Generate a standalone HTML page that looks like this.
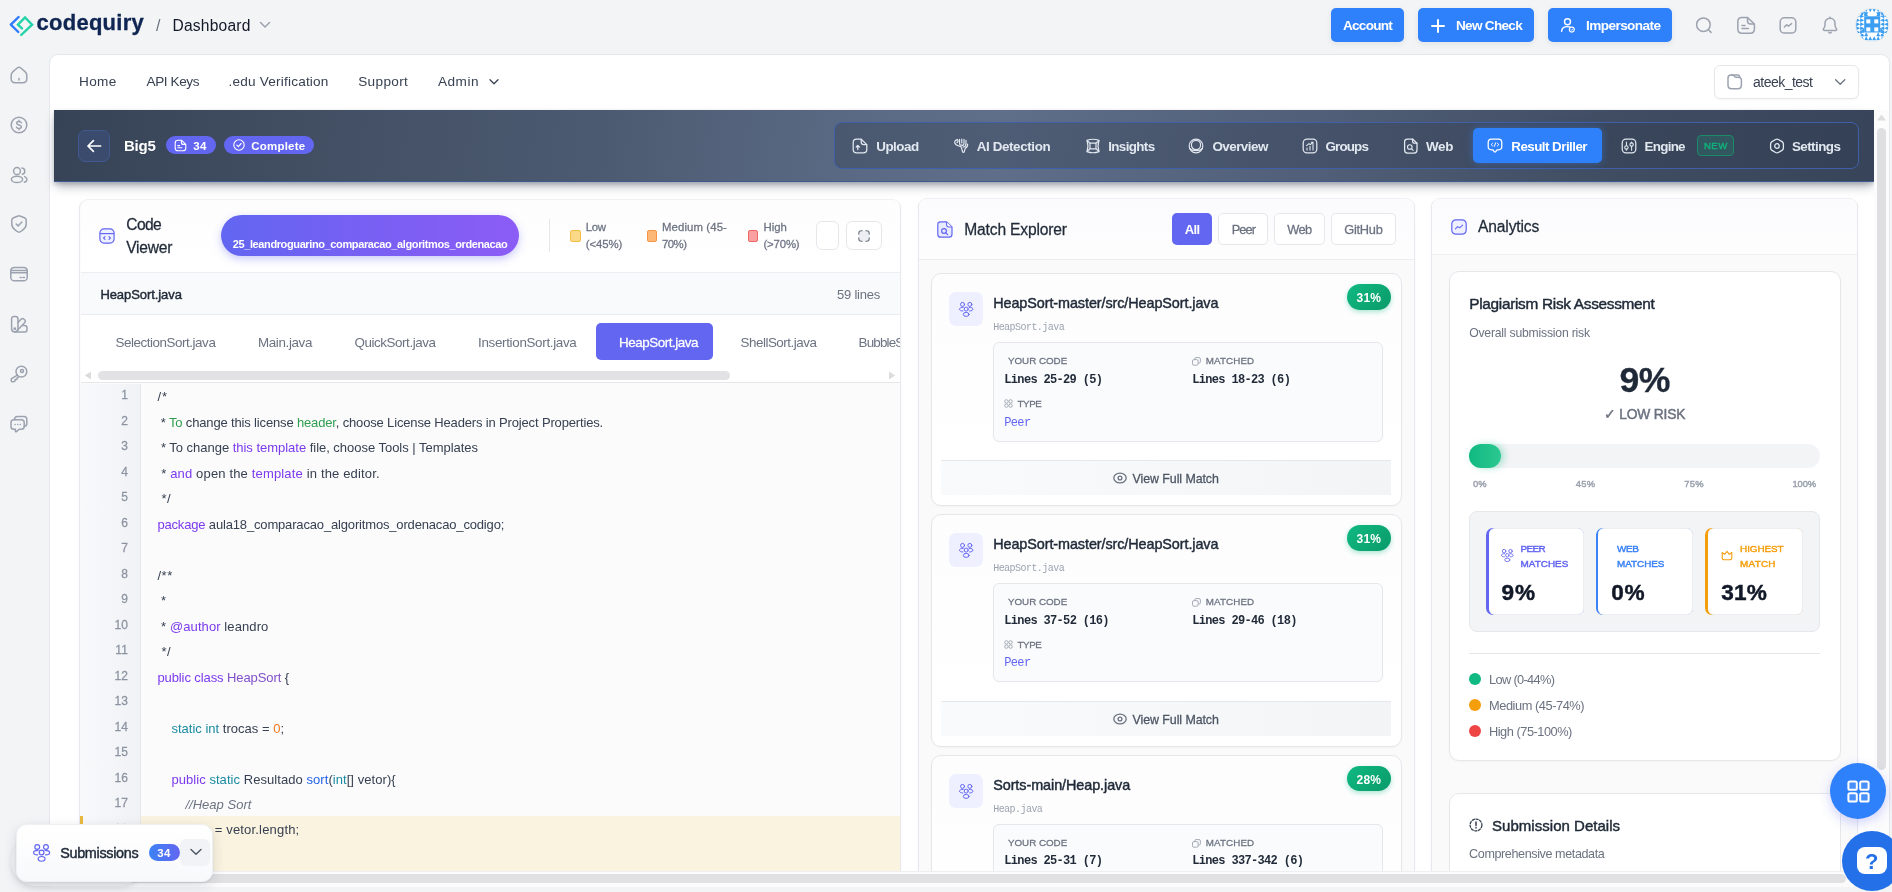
<!DOCTYPE html>
<html lang="en">
<head>
<meta charset="utf-8">
<title>Codequiry - Result Driller</title>
<style>
*{box-sizing:border-box;margin:0;padding:0}
html,body{width:1892px;height:892px;overflow:hidden}
body{background:#f3f4f6;font-family:"Liberation Sans",sans-serif;color:#1f2937;position:relative}
.a{position:absolute}
.t{position:absolute;white-space:nowrap;will-change:opacity}
svg{position:absolute;overflow:visible}
.ic{fill:none;stroke:#9ca3af;stroke-width:1.5;stroke-linecap:round;stroke-linejoin:round}
.btn{position:absolute;background:#2f80fb;border-radius:5px;box-shadow:0 2px 6px rgba(17,24,39,.08)}
</style>
</head>
<body>
<!-- ===== top bar ===== -->
<svg style="left:0;top:0" width="60" height="54" viewBox="0 0 60 54">
  <path d="M18.6 17 L10.8 24.6 L18.3 32" fill="none" stroke="#2f7bff" stroke-width="2.4" stroke-linecap="round" stroke-linejoin="round"/>
  <path d="M22 28.4 L17.9 24.6 L25 17.4 L32.1 24.6 L21.2 35" fill="none" stroke="#23d3a8" stroke-width="2.4" stroke-linecap="round" stroke-linejoin="miter"/>
</svg>
<span class="t" style="-webkit-text-stroke:0.3px currentColor;left:36.5px;top:10px;font-size:22px;line-height:26px;font-weight:700;color:#0f2552;letter-spacing:0.262px">codequiry</span>
<span class="t" style="left:156px;top:16px;font-size:16px;line-height:19px;color:#6b7280">/</span>
<span class="t" style="left:172.5px;top:16.02px;font-size:15.6px;line-height:19px;color:#111827;letter-spacing:0.189px">Dashboard</span>
<svg style="left:259px;top:21px" width="12" height="8" viewBox="0 0 12 8"><path d="M1.5 1.5 L6 6 L10.5 1.5" class="ic" stroke-width="1.3"/></svg>

<div class="btn" style="left:1331px;top:8px;width:73px;height:34px"></div>
<span class="t" style="left:1343px;top:18.01px;font-size:13.6px;line-height:16px;font-weight:700;color:#ffffff;letter-spacing:-0.768px">Account</span>
<div class="btn" style="left:1418px;top:8px;width:116px;height:34px"></div>
<svg style="left:1431px;top:19px" width="14" height="14" viewBox="0 0 14 14"><path d="M7 1 V13 M1 7 H13" stroke="#fff" stroke-width="2" stroke-linecap="round" fill="none"/></svg>
<span class="t" style="left:1456px;top:18.01px;font-size:13.6px;line-height:16px;font-weight:700;color:#ffffff;letter-spacing:-0.726px">New Check</span>
<div class="btn" style="left:1548px;top:8px;width:124.2px;height:34px"></div>
<svg style="left:1560px;top:17px" width="16" height="16" viewBox="0 0 16 16"><circle cx="7.5" cy="4.8" r="3" fill="none" stroke="#fff" stroke-width="1.4"/><path d="M1.6 14.4 C1.8 10.8 4.4 9.6 7.5 9.6 C8.6 9.6 9.5 9.8 10.2 10.1" fill="none" stroke="#fff" stroke-width="1.4" stroke-linecap="round"/><circle cx="11.8" cy="12.6" r="2.5" fill="none" stroke="#fff" stroke-width="1.1"/><path d="M10.8 12.6 l0.8 0.8 l1.3 -1.5" fill="none" stroke="#fff" stroke-width="0.9"/></svg>
<span class="t" style="left:1586px;top:18.01px;font-size:13.6px;line-height:16px;font-weight:700;color:#ffffff;letter-spacing:-0.577px">Impersonate</span>

<svg style="left:1694px;top:15px" width="20" height="20" viewBox="0 0 20 20"><circle cx="9.4" cy="9.7" r="6.8" class="ic"/><path d="M14.4 14.8 L17 17.4" class="ic"/></svg>
<svg style="left:1736px;top:15px" width="20" height="20" viewBox="0 0 20 20"><path d="M6 2.6 H11.5 L18.4 9 V14 C18.4 16.8 17 18.2 14.4 18.2 H6 C3.2 18.2 1.8 16.8 1.8 14 V6.8 C1.8 4 3.2 2.6 6 2.6 Z" class="ic"/><path d="M11.5 2.8 V6 C11.5 8 12.5 9 14.5 9 H18.2" class="ic"/><path d="M6 10.4 H9 M6 13.6 H12.4" class="ic"/></svg>
<svg style="left:1778px;top:15px" width="20" height="20" viewBox="0 0 20 20"><rect x="2.2" y="2.7" width="15.6" height="15.4" rx="4.2" class="ic"/><path d="M6.4 12 L8.6 9.8 L10.6 11 L13.6 8.6" class="ic" stroke-width="1.3"/></svg>
<svg style="left:1820px;top:15px" width="20" height="20" viewBox="0 0 20 20"><path d="M10 3.2 C6.9 3.2 5 5.4 5 8.2 V10.6 C5 11.6 4.4 12.6 3.6 13.6 C3 14.5 3.4 15.4 4.6 15.4 H15.4 C16.6 15.4 17 14.5 16.4 13.6 C15.6 12.6 15 11.6 15 10.6 V8.2 C15 5.4 13.1 3.2 10 3.2 Z" class="ic"/><path d="M10 2.2 V3.2 M8.8 17.4 C9.4 18.2 10.6 18.2 11.2 17.4" class="ic"/></svg>
<!-- avatar identicon -->
<div class="a" style="left:1854.5px;top:7.6px;width:34.8px;height:34.8px;border-radius:50%;background:#e7e8eb"></div>
<svg style="left:1855.7px;top:8.8px" width="32.4" height="32.4" viewBox="0 0 32.4 32.4"><defs><clipPath id="avc"><circle cx="16.2" cy="16.2" r="16.2"/></clipPath></defs><g clip-path="url(#avc)"><rect width="32.4" height="32.4" fill="#fff"/><g transform="translate(0,-0.9)"><path d="M0.2 6.2 L4.2 8.2 L0.2 10.2 Z M32.2 6.2 L28.2 8.2 L32.2 10.2 Z M4.2 6.2 L8.2 8.2 L4.2 10.2 Z M28.2 6.2 L24.2 8.2 L28.2 10.2 Z M0.2 10.2 L4.2 12.2 L0.2 14.2 Z M32.2 10.2 L28.2 12.2 L32.2 14.2 Z M4.2 10.2 L8.2 12.2 L4.2 14.2 Z M28.2 10.2 L24.2 12.2 L28.2 14.2 Z M0.2 14.2 L4.2 16.2 L0.2 18.2 Z M32.2 14.2 L28.2 16.2 L32.2 18.2 Z M4.2 14.2 L8.2 16.2 L4.2 18.2 Z M28.2 14.2 L24.2 16.2 L28.2 18.2 Z M0.2 18.2 L4.2 20.2 L0.2 22.2 Z M32.2 18.2 L28.2 20.2 L32.2 22.2 Z M4.2 18.2 L8.2 20.2 L4.2 22.2 Z M28.2 18.2 L24.2 20.2 L28.2 22.2 Z M0.2 22.2 L4.2 24.2 L0.2 26.2 Z M32.2 22.2 L28.2 24.2 L32.2 26.2 Z M4.2 22.2 L8.2 24.2 L4.2 26.2 Z M28.2 22.2 L24.2 24.2 L28.2 26.2 Z M4.2 0.2 L8.2 0.2 L6.2 4.2 Z M4.2 32.2 L8.2 32.2 L6.2 28.2 Z M4.2 4.2 L8.2 4.2 L6.2 8.2 Z M4.2 28.2 L8.2 28.2 L6.2 24.2 Z M8.2 0.2 L12.2 0.2 L10.2 4.2 Z M8.2 32.2 L12.2 32.2 L10.2 28.2 Z M8.2 4.2 L12.2 4.2 L10.2 8.2 Z M8.2 28.2 L12.2 28.2 L10.2 24.2 Z M12.2 0.2 L16.2 0.2 L14.2 4.2 Z M12.2 32.2 L16.2 32.2 L14.2 28.2 Z M16.2 0.2 L20.2 0.2 L18.2 4.2 Z M16.2 32.2 L20.2 32.2 L18.2 28.2 Z M20.2 0.2 L24.2 0.2 L22.2 4.2 Z M20.2 32.2 L24.2 32.2 L22.2 28.2 Z M20.2 4.2 L24.2 4.2 L22.2 8.2 Z M20.2 28.2 L24.2 28.2 L22.2 24.2 Z M24.2 0.2 L28.2 0.2 L26.2 4.2 Z M24.2 32.2 L28.2 32.2 L26.2 28.2 Z M24.2 4.2 L28.2 4.2 L26.2 8.2 Z M24.2 28.2 L28.2 28.2 L26.2 24.2 Z" fill="#3c9ef0"/><path d="M8.2 8.2 L8.2 3 L12.4 8.2 Z M24.2 8.2 L24.2 3 L20 8.2 Z M8.2 24.2 L3.6 24.2 L8.2 19.6 Z M24.2 24.2 L28.8 24.2 L24.2 19.6 Z" fill="#3c9ef0"/><rect x="8.2" y="8.2" width="16" height="16.2" fill="#3c9ef0"/><rect x="10.3" y="11.3" width="4" height="4" fill="#fff"/><rect x="18.3" y="11.3" width="4" height="4" fill="#fff"/><rect x="10.3" y="19.3" width="4" height="4" fill="#fff"/><rect x="18.3" y="19.3" width="4" height="4" fill="#fff"/></g></g></svg>

<!-- ===== sidebar icons ===== -->
<svg style="left:9px;top:65px" width="20" height="20" viewBox="0 0 20 20"><path d="M10 2.2 C9.4 2.2 8.8 2.5 8.2 3 L4 6.6 C2.8 7.6 2.2 8.6 2.2 10.2 V13.8 C2.2 16.6 3.4 17.8 6.2 17.8 H13.8 C16.6 17.8 17.8 16.6 17.8 13.8 V10.2 C17.8 8.6 17.2 7.6 16 6.6 L11.8 3 C11.2 2.5 10.6 2.2 10 2.2 Z" class="ic"/><path d="M10 13.4 V15" class="ic"/></svg>
<svg style="left:9px;top:115px" width="20" height="20" viewBox="0 0 20 20"><circle cx="10" cy="10" r="7.8" class="ic"/><path d="M12.4 7.8 C12 6.9 11.2 6.5 10 6.5 C8.6 6.5 7.7 7.2 7.7 8.2 C7.7 10.6 12.4 9.4 12.4 11.8 C12.4 12.8 11.4 13.5 10 13.5 C8.7 13.5 7.8 13 7.5 12.1 M10 5.2 V6.5 M10 13.5 V14.8" class="ic" stroke-width="1.3"/></svg>
<svg style="left:9px;top:165px" width="20" height="20" viewBox="0 0 20 20"><ellipse cx="8" cy="6" rx="3.4" ry="3.6" class="ic"/><ellipse cx="8" cy="14.4" rx="5.6" ry="3.2" class="ic"/><path d="M13 3 C14.8 3.2 15.8 4.6 15.8 6.2 C15.8 7.8 14.8 9 13.4 9.3 M15.6 11.6 C17.2 12.2 18 13.2 18 14.4 C18 15.6 17 16.6 15.4 17.2" class="ic"/></svg>
<svg style="left:9px;top:214px" width="20" height="20" viewBox="0 0 20 20"><path d="M10 1.8 C9.4 1.8 8.9 2 8.4 2.2 L4.6 3.7 C3.4 4.2 2.8 5 2.8 6.2 V10 C2.8 12.6 4.2 14.6 6.4 16.2 L8.2 17.5 C9.3 18.3 10.7 18.3 11.8 17.5 L13.6 16.2 C15.8 14.6 17.2 12.6 17.2 10 V6.2 C17.2 5 16.6 4.2 15.4 3.7 L11.6 2.2 C11.1 2 10.6 1.8 10 1.8 Z" class="ic"/><path d="M7.2 10 L9.1 11.9 L12.9 8" class="ic"/></svg>
<svg style="left:9px;top:264px" width="20" height="20" viewBox="0 0 20 20"><rect x="1.8" y="3.4" width="16.4" height="13.4" rx="3.4" class="ic"/><path d="M1.8 6.6 H18.2 M1.8 8.8 H18.2 M11.2 13.6 H12.2 M14 13.6 H15.4" class="ic"/></svg>
<svg style="left:9px;top:314px" width="20" height="20" viewBox="0 0 20 20"><path d="M2.6 5 C2.6 3.2 3.4 2.4 5.2 2.4 H6.4 C8.2 2.4 9 3.2 9 5 V14.8 C9 16.6 7.6 18 5.8 18 C4 18 2.6 16.6 2.6 14.8 Z" class="ic"/><path d="M9 8.4 L12 5.2 C13 4.2 14 4.2 15 5.2 L15.6 5.8 C16.6 6.8 16.6 7.8 15.6 8.8 L8 16.8" class="ic"/><path d="M13.6 11.4 H15.6 C17.2 11.4 18 12.2 18 13.8 V15.4 C18 17.2 17.2 18 15.6 18 H5.8" class="ic"/><circle cx="5.8" cy="14.8" r="0.7" class="ic"/></svg>
<svg style="left:9px;top:364px" width="20" height="20" viewBox="0 0 20 20"><circle cx="12.4" cy="7.6" r="5.4" class="ic"/><circle cx="13" cy="7" r="1.5" class="ic" stroke-width="1.3"/><path d="M8.4 11.2 L2.6 14.6 C2.2 15 2.1 15.4 2.2 16 L2.4 17 C2.5 17.6 2.9 17.9 3.5 17.8 L5.2 17.6 C5.8 17.5 6.1 17.2 6.1 16.6 V15.6 H7.2 C7.8 15.6 8.1 15.3 8.1 14.7 V13.9 L9.6 13" class="ic"/></svg>
<svg style="left:9px;top:414px" width="20" height="20" viewBox="0 0 20 20"><path d="M5.6 5.8 V5.2 C5.6 3.4 6.6 2.4 8.4 2.4 H15 C16.8 2.4 17.8 3.4 17.8 5.2 V9.4 C17.8 11.2 16.8 12.2 15.2 12.2" class="ic"/><path d="M4.8 5.8 H12.4 C14.2 5.8 15.2 6.8 15.2 8.6 V12.4 C15.2 14.2 14.2 15.2 12.4 15.2 H10.2 L7.4 17.6 C6.9 18 6.4 17.8 6.4 17.2 V15.2 H4.8 C3 15.2 2 14.2 2 12.4 V8.6 C2 6.8 3 5.8 4.8 5.8 Z" class="ic"/><path d="M6 10.6 H6.1 M8.6 10.6 H8.7 M11.2 10.6 H11.3" class="ic" stroke-width="1.6"/></svg>

<!-- ===== main white card ===== -->
<div class="a" style="left:48.5px;top:54px;width:1841.5px;height:833px;background:#fff;border:1px solid #e5e7eb;border-radius:9px 9px 0 0"></div>
<span class="t" style="left:79px;top:74.01px;font-size:13.6px;line-height:16px;color:#374151;letter-spacing:0.309px">Home</span>
<span class="t" style="left:146.6px;top:74.01px;font-size:13.6px;line-height:16px;color:#374151;letter-spacing:-0.428px">API Keys</span>
<span class="t" style="left:228.6px;top:74.01px;font-size:13.6px;line-height:16px;color:#374151;letter-spacing:0.192px">.edu Verification</span>
<span class="t" style="left:358.2px;top:74.01px;font-size:13.6px;line-height:16px;color:#374151;letter-spacing:0.339px">Support</span>
<span class="t" style="left:438px;top:74.01px;font-size:13.6px;line-height:16px;color:#374151;letter-spacing:0.494px">Admin</span>
<svg style="left:488px;top:78px" width="12" height="8" viewBox="0 0 12 8"><path d="M2 1.8 L6 5.8 L10 1.8" fill="none" stroke="#374151" stroke-width="1.3" stroke-linecap="round" stroke-linejoin="round"/></svg>
<!-- workspace select -->
<div class="a" style="left:1714px;top:65px;width:145px;height:34px;background:#fff;border:1px solid #e5e7eb;border-radius:6px;box-shadow:0 1px 2px rgba(0,0,0,.04)"></div>
<svg style="left:1725px;top:72px" width="20" height="20" viewBox="0 0 20 20"><path d="M3 7.2 V6 C3 4 4 3 6 3 H7.4 C8.4 3 8.8 3.3 9.3 4 L9.9 4.8 C10.2 5.2 10.4 5.3 11 5.3 H13 C15 5.3 16.4 6.3 16.4 8.4 V13 C16.4 15.6 15.4 16.8 12.8 16.8 H6.6 C4 16.8 3 15.6 3 13 Z" class="ic" stroke-width="1.3"/><path d="M6.4 3 H12.6 C13.8 3 14.6 3.6 14.8 4.8" class="ic" stroke-width="1.3"/></svg>
<span class="t" style="left:1753px;top:74.01px;font-size:14px;line-height:17px;color:#374151;letter-spacing:-0.511px">ateek_test</span>
<svg style="left:1834px;top:78px" width="12" height="8" viewBox="0 0 12 8"><path d="M1.6 1.8 L6.2 6.2 L10.8 1.8" fill="none" stroke="#6b7280" stroke-width="1.3" stroke-linecap="round" stroke-linejoin="round"/></svg>


<!-- ===== dark toolbar ===== -->
<div class="a" style="left:54px;top:110px;width:1820px;height:72px;background:linear-gradient(97deg,#364357 0%,#414e62 13%,#4c5a71 30%,#5b6a84 44%,#5f6e89 52%,#505e77 70%,#3f4c61 86%,#374459 100%);border-bottom:1px solid #40598f;box-shadow:0 6px 10px -2px rgba(30,41,59,.35),0 2px 4px rgba(30,41,59,.2)"></div>
<!-- right page scrollbar -->
<div class="a" style="left:1874px;top:110px;width:15px;height:776px;background:#fcfcfd"></div>
<div class="a" style="left:1877px;top:128px;width:9px;height:642px;border-radius:5px;background:#dfdfe2"></div>
<svg style="left:1876px;top:113px" width="11" height="9" viewBox="0 0 11 9"><path d="M5.5 1.5 L10 7.5 H1 Z" fill="#dedee0"/></svg>

<div class="a" style="left:78px;top:130px;width:32px;height:32px;border-radius:7px;background:#3a4b6e;border:1px solid #40598f"></div>
<svg style="left:86px;top:138px" width="16" height="16" viewBox="0 0 16 16"><path d="M14.6 8 H2 M7.4 2.6 L2 8 L7.4 13.4" fill="none" stroke="#fff" stroke-width="1.7" stroke-linecap="round" stroke-linejoin="round"/></svg>
<span class="t" style="left:124px;top:137px;font-size:15px;line-height:18px;font-weight:700;color:#ffffff;letter-spacing:-0.254px">Big5</span>
<div class="a" style="left:166px;top:136px;width:50px;height:18px;border-radius:9px;background:#6366f1"></div>
<svg style="left:174px;top:138.5px" width="13" height="13" viewBox="0 0 13 13"><path d="M4 1.2 H7.4 L11.8 5.4 V9 C11.8 10.9 10.9 11.8 9 11.8 H4 C2.1 11.8 1.2 10.9 1.2 9 V4 C1.2 2.1 2.1 1.2 4 1.2 Z M7.4 1.4 V3.4 C7.4 4.8 8 5.4 9.4 5.4 H11.6 M3.8 6.6 H5.6 M3.8 8.8 H7.8" fill="none" stroke="#fff" stroke-width="1.1" stroke-linecap="round" stroke-linejoin="round"/></svg>
<span class="t" style="left:193.3px;top:139px;font-size:11.5px;line-height:14px;font-weight:700;color:#ffffff;letter-spacing:0.352px">34</span>
<div class="a" style="left:224px;top:136px;width:89.8px;height:18px;border-radius:9px;background:#6366f1"></div>
<svg style="left:232.5px;top:139px" width="12" height="12" viewBox="0 0 12 12"><circle cx="6" cy="6" r="5.2" fill="none" stroke="#fff" stroke-width="1.1"/><path d="M3.8 6.1 L5.3 7.6 L8.2 4.5" fill="none" stroke="#fff" stroke-width="1.1" stroke-linecap="round" stroke-linejoin="round"/></svg>
<span class="t" style="left:251.3px;top:139px;font-size:11.5px;line-height:14px;font-weight:700;color:#ffffff;letter-spacing:0.199px">Complete</span>

<!-- tab strip -->
<div class="a" style="left:834px;top:122px;width:1025px;height:46.7px;border-radius:8px;background:linear-gradient(90deg,rgba(30,41,59,.28) 0%,rgba(30,41,59,.24) 45%,rgba(30,41,59,.12) 100%);border:1px solid #3f5fa8"></div>
<div class="a" style="left:1473px;top:128px;width:128.5px;height:35px;border-radius:5px;background:#2f80fb;box-shadow:0 0 8px rgba(59,130,246,.45)"></div>
<svg style="left:852px;top:138px" width="16" height="16" viewBox="0 0 16 16"><g fill="none" stroke="#e2e8f0" stroke-width="1.25" stroke-linecap="round" stroke-linejoin="round"><path d="M4.6 1.2 H9.2 L14.8 6.6 V11.4 C14.8 13.8 13.8 14.8 11.4 14.8 H4.6 C2.2 14.8 1.2 13.8 1.2 11.4 V4.6 C1.2 2.2 2.2 1.2 4.6 1.2 Z"/><path d="M9.2 1.4 V4 C9.2 5.8 10 6.6 11.8 6.6 H14.6"/><path d="M5.8 11.6 V7.6 M4.2 9 L5.8 7.4 L7.4 9"/></g></svg>
<svg style="left:953px;top:138px" width="16" height="16" viewBox="0 0 16 16"><g fill="none" stroke="#e2e8f0" stroke-width="1.2" stroke-linecap="round" stroke-linejoin="round"><path d="M4.4 1.6 C2.4 2 1.4 3.4 1.8 5 C2.2 6.6 3.6 7.4 5.4 7.8 L8 8.6 L9.6 13.8 C9.9 14.7 10.9 14.7 11.2 13.8 L12.2 10.4 C13.8 9.6 14.8 8 14.6 6"/><path d="M6.6 1.4 V5.4 C6.6 6.6 7.6 7.2 8.6 7.2 M8.8 1.2 V5 M11 1.4 V5.2 C11 6.6 10 7.4 8.8 7.4 M13 2.4 V5.4 C13 7.4 11.8 8.8 10 9.2"/><path d="M4.4 1.6 C5.6 2.4 5.2 4 4 4.6"/></g></svg>
<svg style="left:1084.5px;top:138px" width="16" height="16" viewBox="0 0 16 16"><g fill="none" stroke="#e2e8f0" stroke-width="1.2" stroke-linecap="round" stroke-linejoin="round"><path d="M2 2.4 C5.6 1 10.4 1 14 2.4 C12.8 6 12.8 10 14 13.6 C10.4 15 5.6 15 2 13.6 C3.2 10 3.2 6 2 2.4 Z"/><rect x="5" y="5.2" width="6" height="5.6" rx="0.8"/><path d="M2.2 2.6 L5 5.2 M13.8 2.6 L11 5.2 M2.2 13.4 L5 10.8 M13.8 13.4 L11 10.8"/></g></svg>
<svg style="left:1188px;top:138px" width="16" height="16" viewBox="0 0 16 16"><g fill="none" stroke="#e2e8f0" stroke-width="1.2" stroke-linecap="round" stroke-linejoin="round"><circle cx="8" cy="8" r="6.8"/><circle cx="8" cy="7" r="4.6"/><path d="M2.2 10.6 C4 13.2 12 13.2 13.8 10.6"/></g></svg>
<svg style="left:1302px;top:138px" width="16" height="16" viewBox="0 0 16 16"><g fill="none" stroke="#e2e8f0" stroke-width="1.25" stroke-linecap="round" stroke-linejoin="round"><rect x="1.2" y="1.2" width="13.6" height="13.6" rx="3.8"/><path d="M5 12 V10 M8 12 V8.4 M11 12 V6.6 M4.6 7.6 L7 5.6 L8.4 6.6 L11 4.2 M9.4 4.2 H11 V5.8" stroke-width="1.1"/></g></svg>
<svg style="left:1403px;top:138px" width="16" height="16" viewBox="0 0 16 16"><g fill="none" stroke="#e2e8f0" stroke-width="1.25" stroke-linecap="round" stroke-linejoin="round"><path d="M4.4 1 H9.6 L14 5.2 V12 C14 14.2 13 15 11 15 H4.4 C2.4 15 1.6 14.2 1.6 12 V4 C1.6 1.8 2.4 1 4.4 1 Z"/><path d="M9.6 1.2 V3.4 C9.6 4.8 10.2 5.2 11.6 5.2 H13.8"/><circle cx="6.8" cy="9" r="2.3" stroke-width="1.1"/><path d="M8.6 10.8 L10.2 12.4" stroke-width="1.1"/></g></svg>
<svg style="left:1487px;top:138px" width="16" height="16" viewBox="0 0 16 16"><g fill="none" stroke="#ffffff" stroke-width="1.25" stroke-linecap="round" stroke-linejoin="round"><path d="M4.4 1.2 H11.6 C13.8 1.2 14.8 2.2 14.8 4.4 V8.6 C14.8 10.8 13.8 11.8 11.6 11.8 H10 L8.6 13.8 C8.3 14.3 7.7 14.3 7.4 13.8 L6 11.8 H4.4 C2.2 11.8 1.2 10.8 1.2 8.6 V4.4 C1.2 2.2 2.2 1.2 4.4 1.2 Z"/><path d="M5.6 5.2 L4.2 6.6 L5.6 8 M10.4 5.2 L11.8 6.6 L10.4 8 M8.6 4.8 L7.4 8.4" stroke-width="1"/></g></svg>
<svg style="left:1620.5px;top:138px" width="16" height="16" viewBox="0 0 16 16"><g fill="none" stroke="#e2e8f0" stroke-width="1.25" stroke-linecap="round" stroke-linejoin="round"><rect x="1.2" y="1.2" width="13.6" height="13.6" rx="3.8"/><path d="M5.4 4 V7.6 M5.4 11.2 V12.2 M10.6 4 V4.8 M10.6 8.4 V12.2" stroke-width="1.1"/><circle cx="5.4" cy="9.4" r="1.7" stroke-width="1.1"/><circle cx="10.6" cy="6.6" r="1.7" stroke-width="1.1"/></g></svg>
<svg style="left:1768.5px;top:138px" width="16" height="16" viewBox="0 0 16 16"><g fill="none" stroke="#e2e8f0" stroke-width="1.3" stroke-linecap="round" stroke-linejoin="round"><path d="M6.6 1.5 C7.5 1 8.5 1 9.4 1.5 L13 3.6 C13.9 4.1 14.4 5 14.4 6 V10 C14.4 11 13.9 11.9 13 12.4 L9.4 14.5 C8.5 15 7.5 15 6.6 14.5 L3 12.4 C2.1 11.9 1.6 11 1.6 10 V6 C1.6 5 2.1 4.1 3 3.6 Z"/><circle cx="8" cy="8" r="2.3"/></g></svg>

<span class="t" style="left:876.2px;top:139px;font-size:13.4px;line-height:16px;font-weight:700;color:#e2e8f0;letter-spacing:-0.482px">Upload</span>
<span class="t" style="left:976.7px;top:139px;font-size:13.4px;line-height:16px;font-weight:700;color:#e2e8f0;letter-spacing:-0.377px">AI Detection</span>
<span class="t" style="left:1108.2px;top:139px;font-size:13.4px;line-height:16px;font-weight:700;color:#e2e8f0;letter-spacing:-0.630px">Insights</span>
<span class="t" style="left:1212.4px;top:139px;font-size:13.4px;line-height:16px;font-weight:700;color:#e2e8f0;letter-spacing:-0.520px">Overview</span>
<span class="t" style="left:1325.4px;top:139px;font-size:13.4px;line-height:16px;font-weight:700;color:#e2e8f0;letter-spacing:-0.821px">Groups</span>
<span class="t" style="left:1426px;top:139px;font-size:13.4px;line-height:16px;font-weight:700;color:#e2e8f0;letter-spacing:-0.344px">Web</span>
<span class="t" style="left:1511.3px;top:139px;font-size:13.4px;line-height:16px;font-weight:700;color:#ffffff;letter-spacing:-0.547px">Result Driller</span>
<span class="t" style="left:1644.6px;top:139px;font-size:13.4px;line-height:16px;font-weight:700;color:#e2e8f0;letter-spacing:-0.740px">Engine</span>
<div class="a" style="left:1697px;top:135px;width:37px;height:20.5px;border-radius:4px;background:rgba(16,185,129,.16);border:1px solid #1a8a69"></div>
<span class="t" style="left:1704px;top:140.02px;font-size:9.6px;line-height:12px;-webkit-text-stroke:0.45px currentColor;color:#12b07c;letter-spacing:0.403px">NEW</span>
<span class="t" style="left:1791.9px;top:139px;font-size:13.4px;line-height:16px;font-weight:700;color:#e2e8f0;letter-spacing:-0.541px">Settings</span>

<!-- ===== Code Viewer panel ===== -->
<div class="a" style="left:79px;top:198.5px;width:822px;height:674px;background:#fbfbfc;border:1px solid #e7e9ee;border-top-color:#eff1f4;border-radius:9px 9px 0 0;box-shadow:0 1px 3px rgba(0,0,0,.04)"></div>
<div class="a" style="left:81px;top:199.5px;width:819px;height:73.3px;background:linear-gradient(180deg,#fdfdfe,#ffffff);border-radius:8px 8px 0 0;border-bottom:1px solid #eceef2"></div>
<svg style="left:99px;top:227.9px" width="16" height="16" viewBox="0 0 16 16"><rect x="0.9" y="0.9" width="14.2" height="14.2" rx="4" fill="#eef0ff" stroke="#6366f1" stroke-width="1.2"/><path d="M1 5.6 H15" stroke="#6366f1" stroke-width="1.2" fill="none"/><path d="M6 8.6 L4.6 10 L6 11.4 M10 8.6 L11.4 10 L10 11.4" stroke="#6366f1" stroke-width="1.1" fill="none" stroke-linecap="round" stroke-linejoin="round"/></svg>
<span class="t" style="left:126.2px;top:215.01px;font-size:15.6px;line-height:19px;-webkit-text-stroke:0.26px currentColor;color:#1f2937;letter-spacing:-0.570px">Code</span>
<span class="t" style="left:126.2px;top:238.02px;font-size:15.6px;line-height:19px;-webkit-text-stroke:0.26px currentColor;color:#1f2937;letter-spacing:-0.232px">Viewer</span>
<div class="a" style="left:221px;top:215px;width:297.8px;height:40.5px;border-radius:21px;background:linear-gradient(90deg,#6266f1 0%,#7a5ff3 55%,#8b5cf6 100%);box-shadow:0 3px 8px rgba(99,102,241,.35)"></div>
<span class="t" style="left:232.7px;top:238.01px;font-size:11px;line-height:13px;font-weight:700;color:#ffffff;letter-spacing:-0.382px">25_leandroguarino_comparacao_algoritmos_ordenacao</span>
<div class="a" style="left:549px;top:219px;width:1px;height:33px;background:#e5e7eb"></div>
<div class="a" style="left:570.3px;top:230px;width:10.4px;height:11.6px;border-radius:2px;background:#fbd989;border:1px solid #f2bd48"></div>
<span class="t" style="left:585.8px;top:220.01px;font-size:11.4px;line-height:14px;-webkit-text-stroke:0.26px currentColor;color:#6b7280;letter-spacing:-0.302px">Low</span>
<span class="t" style="left:585.8px;top:237.01px;font-size:11.4px;line-height:14px;-webkit-text-stroke:0.26px currentColor;color:#6b7280;letter-spacing:-0.108px">(&lt;45%)</span>
<div class="a" style="left:647px;top:230px;width:10.4px;height:11.6px;border-radius:2px;background:#fbb877;border:1px solid #f59644"></div>
<span class="t" style="left:662px;top:220.01px;font-size:11.4px;line-height:14px;-webkit-text-stroke:0.26px currentColor;color:#6b7280;letter-spacing:0.097px">Medium (45-</span>
<span class="t" style="left:662px;top:237.01px;font-size:11.4px;line-height:14px;-webkit-text-stroke:0.26px currentColor;color:#6b7280;letter-spacing:-0.523px">70%)</span>
<div class="a" style="left:748px;top:230px;width:10.4px;height:11.6px;border-radius:2px;background:#f9a0a0;border:1px solid #ef6767"></div>
<span class="t" style="left:763.5px;top:220.01px;font-size:11.4px;line-height:14px;-webkit-text-stroke:0.26px currentColor;color:#6b7280;letter-spacing:-0.009px">High</span>
<span class="t" style="left:763.5px;top:237.01px;font-size:11.4px;line-height:14px;-webkit-text-stroke:0.26px currentColor;color:#6b7280;letter-spacing:-0.174px">(&gt;70%)</span>
<div class="a" style="left:815.5px;top:220.8px;width:23px;height:28.8px;border-radius:6px;background:#fff;border:1px solid #e5e7eb"></div>
<div class="a" style="left:845.5px;top:220.8px;width:36.5px;height:28.8px;border-radius:6px;background:#fff;border:1px solid #e5e7eb"></div>
<svg style="left:857.6px;top:229.8px" width="12" height="12" viewBox="0 0 12 12"><rect x="0.8" y="0.8" width="10.4" height="10.4" rx="2.6" fill="#eceef1"/><path d="M0.8 4.2 V3.2 C0.8 1.6 1.6 0.8 3.2 0.8 H4.2 M7.8 0.8 H8.8 C10.4 0.8 11.2 1.6 11.2 3.2 V4.2 M11.2 7.8 V8.8 C11.2 10.4 10.4 11.2 8.8 11.2 H7.8 M4.2 11.2 H3.2 C1.6 11.2 0.8 10.4 0.8 8.8 V7.8" fill="none" stroke="#6b7280" stroke-width="1.1" stroke-linecap="round"/></svg>
<!-- file header -->
<div class="a" style="left:81px;top:273px;width:819px;height:41.5px;background:#f9fafb;border-bottom:1px solid #e9ebef"></div>
<span class="t" style="left:100.4px;top:287px;font-size:13px;line-height:16px;-webkit-text-stroke:0.45px currentColor;color:#1f2937;letter-spacing:-0.069px">HeapSort.java</span>
<span class="t" style="left:837px;top:287px;font-size:13px;line-height:16px;color:#6b7280;letter-spacing:-0.227px">59 lines</span>
<!-- file tabs -->
<div class="a" style="left:81px;top:315px;width:819px;height:68px;background:#fff;border-bottom:1px solid #e5e7eb"></div>
<div class="a" style="left:596px;top:323px;width:117px;height:36.5px;border-radius:5px;background:#6366f1"></div>
<span class="t" style="left:115.4px;top:335.01px;font-size:13.4px;line-height:16px;color:#6b7280;letter-spacing:-0.441px">SelectionSort.java</span>
<span class="t" style="left:258px;top:335.01px;font-size:13.4px;line-height:16px;color:#6b7280;letter-spacing:-0.368px">Main.java</span>
<span class="t" style="left:354.5px;top:335.01px;font-size:13.4px;line-height:16px;color:#6b7280;letter-spacing:-0.434px">QuickSort.java</span>
<span class="t" style="left:478px;top:335.01px;font-size:13.4px;line-height:16px;color:#6b7280;letter-spacing:-0.317px">InsertionSort.java</span>
<span class="t" style="left:619px;top:335.01px;font-size:13.4px;line-height:16px;-webkit-text-stroke:0.26px currentColor;color:#ffffff;letter-spacing:-0.451px">HeapSort.java</span>
<span class="t" style="left:740.5px;top:335.01px;font-size:13.4px;line-height:16px;color:#6b7280;letter-spacing:-0.473px">ShellSort.java</span>
<span class="t" style="width:41.4px;overflow:hidden;left:858.6px;top:335.01px;font-size:13.4px;line-height:16px;color:#6b7280;letter-spacing:-0.836px">BubbleSort.java</span>
<div class="a" style="left:98px;top:371px;width:632px;height:8.5px;border-radius:4.5px;background:#e2e2e4"></div>
<svg style="left:84px;top:371px" width="8" height="9" viewBox="0 0 8 9"><path d="M7 0.5 V8.5 L0.8 4.5 Z" fill="#dcdcde"/></svg>
<svg style="left:888px;top:371px" width="8" height="9" viewBox="0 0 8 9"><path d="M1 0.5 V8.5 L7.2 4.5 Z" fill="#dcdcde"/></svg>
<!-- code body -->
<div class="a" style="left:79.8px;top:384px;width:61.2px;height:488px;background:linear-gradient(90deg,#f8f9fb,#f1f2f5);border-right:1px solid #e5e7eb"></div>
<div class="a" style="left:141px;top:815.8px;width:759px;height:55.7px;background:#faf3e0"></div>
<div class="a" style="left:79.6px;top:815.8px;width:3.2px;height:55.7px;background:#eab93f"></div>
<span class="t" style="right:1764.2px;top:388.01px;font-size:12px;line-height:14px;-webkit-text-stroke:0.26px currentColor;color:#8b93a1">1</span>
<span class="t" style="white-space:pre;left:157.4px;top:389px;font-size:13px;line-height:16px;color:#374151;letter-spacing:0.914px">/*</span>
<span class="t" style="right:1764.2px;top:414.01px;font-size:12px;line-height:14px;-webkit-text-stroke:0.26px currentColor;color:#8b93a1">2</span>
<span class="t" style="white-space:pre;left:157.4px;top:415px;font-size:13px;line-height:16px;color:#374151;letter-spacing:-0.156px"> * <span style="color:#2f9e4f">To</span> change this license <span style="color:#2f9e4f">header</span>, choose License Headers in Project Properties.</span>
<span class="t" style="right:1764.2px;top:439.01px;font-size:12px;line-height:14px;-webkit-text-stroke:0.26px currentColor;color:#8b93a1">3</span>
<span class="t" style="white-space:pre;left:157.4px;top:440px;font-size:13px;line-height:16px;color:#374151;letter-spacing:-0.026px"> * To change <span style="color:#7c3aed">this template</span> file, choose Tools | Templates</span>
<span class="t" style="right:1764.2px;top:465.01px;font-size:12px;line-height:14px;-webkit-text-stroke:0.26px currentColor;color:#8b93a1">4</span>
<span class="t" style="white-space:pre;left:157.4px;top:466px;font-size:13px;line-height:16px;color:#374151;letter-spacing:0.160px"> * <span style="color:#7c3aed">and</span> open the <span style="color:#7c3aed">template</span> in the editor.</span>
<span class="t" style="right:1764.2px;top:490.01px;font-size:12px;line-height:14px;-webkit-text-stroke:0.26px currentColor;color:#8b93a1">5</span>
<span class="t" style="white-space:pre;left:157.4px;top:491px;font-size:13px;line-height:16px;color:#374151;letter-spacing:0.501px"> */</span>
<span class="t" style="right:1764.2px;top:516.01px;font-size:12px;line-height:14px;-webkit-text-stroke:0.26px currentColor;color:#8b93a1">6</span>
<span class="t" style="white-space:pre;left:157.4px;top:517px;font-size:13px;line-height:16px;color:#374151;letter-spacing:-0.163px"><span style="color:#7c3aed">package</span> aula18_comparacao_algoritmos_ordenacao_codigo;</span>
<span class="t" style="right:1764.2px;top:541.01px;font-size:12px;line-height:14px;-webkit-text-stroke:0.26px currentColor;color:#8b93a1">7</span>
<span class="t" style="right:1764.2px;top:567.01px;font-size:12px;line-height:14px;-webkit-text-stroke:0.26px currentColor;color:#8b93a1">8</span>
<span class="t" style="white-space:pre;left:157.4px;top:568px;font-size:13px;line-height:16px;color:#374151;letter-spacing:0.622px">/**</span>
<span class="t" style="right:1764.2px;top:592.01px;font-size:12px;line-height:14px;-webkit-text-stroke:0.26px currentColor;color:#8b93a1">9</span>
<span class="t" style="white-space:pre;left:157.4px;top:593px;font-size:13px;line-height:16px;color:#374151;letter-spacing:-0.036px"> *</span>
<span class="t" style="right:1764.2px;top:618.01px;font-size:12px;line-height:14px;-webkit-text-stroke:0.26px currentColor;color:#8b93a1">10</span>
<span class="t" style="white-space:pre;left:157.4px;top:619px;font-size:13px;line-height:16px;color:#374151;letter-spacing:0.092px"> * <span style="color:#7c3aed">@author</span> leandro</span>
<span class="t" style="right:1764.2px;top:643.01px;font-size:12px;line-height:14px;-webkit-text-stroke:0.26px currentColor;color:#8b93a1">11</span>
<span class="t" style="white-space:pre;left:157.4px;top:644px;font-size:13px;line-height:16px;color:#374151;letter-spacing:0.501px"> */</span>
<span class="t" style="right:1764.2px;top:669.01px;font-size:12px;line-height:14px;-webkit-text-stroke:0.26px currentColor;color:#8b93a1">12</span>
<span class="t" style="white-space:pre;left:157.4px;top:670px;font-size:13px;line-height:16px;color:#374151;letter-spacing:-0.092px"><span style="color:#7c3aed">public class</span> <span style="color:#8250c9">HeapSort</span> {</span>
<span class="t" style="right:1764.2px;top:694.01px;font-size:12px;line-height:14px;-webkit-text-stroke:0.26px currentColor;color:#8b93a1">13</span>
<span class="t" style="right:1764.2px;top:720.01px;font-size:12px;line-height:14px;-webkit-text-stroke:0.26px currentColor;color:#8b93a1">14</span>
<span class="t" style="white-space:pre;left:171.4px;top:721px;font-size:13px;line-height:16px;color:#374151;letter-spacing:0.010px"><span style="color:#1a8ba0">static int</span> trocas = <span style="color:#f2761d">0</span>;</span>
<span class="t" style="right:1764.2px;top:745.01px;font-size:12px;line-height:14px;-webkit-text-stroke:0.26px currentColor;color:#8b93a1">15</span>
<span class="t" style="right:1764.2px;top:771.01px;font-size:12px;line-height:14px;-webkit-text-stroke:0.26px currentColor;color:#8b93a1">16</span>
<span class="t" style="white-space:pre;left:171.4px;top:772px;font-size:13px;line-height:16px;color:#374151;letter-spacing:0.058px"><span style="color:#7c3aed">public</span> <span style="color:#1a8ba0">static</span> Resultado <span style="color:#2563eb">sort</span>(<span style="color:#1a8ba0">int</span>[] vetor){</span>
<span class="t" style="right:1764.2px;top:796.01px;font-size:12px;line-height:14px;-webkit-text-stroke:0.26px currentColor;color:#8b93a1">17</span>
<span class="t" style="white-space:pre;left:185.4px;top:797px;font-size:13px;line-height:16px;color:#374151;letter-spacing:0.021px"><i style="color:#6b7280">//Heap Sort</i></span>
<span class="t" style="right:1764.2px;top:822.01px;font-size:12px;line-height:14px;-webkit-text-stroke:0.26px currentColor;color:#8b93a1">18</span>
<span class="t" style="white-space:pre;left:185.4px;top:822px;font-size:13px;line-height:16px;color:#374151;letter-spacing:0.180px"><span style="color:#1a8ba0">int</span> n = vetor.length;</span>

<!-- ===== Match Explorer panel ===== -->
<div class="a" style="left:917.5px;top:198px;width:497.5px;height:674.5px;background:#fafafb;border:1px solid #e7e9ee;border-top-color:#eff1f4;border-radius:9px 9px 0 0;box-shadow:0 1px 3px rgba(0,0,0,.04);overflow:hidden"><div class="a" style="left:0;top:0;width:100%;height:60.5px;background:linear-gradient(180deg,#fbfbfd,#fdfdfe);border-bottom:1px solid #eceef2"></div></div>
<svg style="left:937px;top:221px" width="16" height="17" viewBox="0 0 16 17"><path d="M3.6 0.8 H9.4 L15 6 V13.2 C15 15.4 14.2 16.2 12 16.2 H3.6 C1.6 16.2 0.8 15.4 0.8 13.2 V3.8 C0.8 1.6 1.6 0.8 3.6 0.8 Z" fill="#e8eaff" stroke="#6366f1" stroke-width="1.2" stroke-linejoin="round"/><path d="M9.6 1 V3.6 C9.6 5.4 10.4 6 12 6 H14.8" fill="#fff" stroke="#6366f1" stroke-width="1.1" stroke-linejoin="round"/><circle cx="7" cy="10" r="2.4" fill="none" stroke="#6366f1" stroke-width="1.2"/><path d="M8.8 11.8 L10.6 13.6" stroke="#6366f1" stroke-width="1.2" stroke-linecap="round"/></svg>
<span class="t" style="left:964.3px;top:220.01px;font-size:15.6px;line-height:19px;-webkit-text-stroke:0.26px currentColor;color:#1f2937;letter-spacing:-0.170px">Match Explorer</span>
<div class="a" style="left:1172px;top:213px;width:40px;height:32px;border-radius:5px;background:#6366f1"></div>
<span class="t" style="left:1184.8px;top:222px;font-size:13px;line-height:16px;font-weight:700;color:#ffffff;letter-spacing:-0.708px">All</span>
<div class="a" style="left:1218.2px;top:213px;width:49.4px;height:32px;border-radius:5px;background:#fff;border:1px solid #e5e7eb"></div>
<span class="t" style="left:1231.7px;top:222.01px;font-size:12.8px;line-height:15px;-webkit-text-stroke:0.26px currentColor;color:#6b7280;letter-spacing:-0.933px">Peer</span>
<div class="a" style="left:1273.8px;top:213px;width:50.8px;height:32px;border-radius:5px;background:#fff;border:1px solid #e5e7eb"></div>
<span class="t" style="left:1287.2px;top:222.01px;font-size:12.8px;line-height:15px;-webkit-text-stroke:0.26px currentColor;color:#6b7280;letter-spacing:-0.565px">Web</span>
<div class="a" style="left:1331.2px;top:213px;width:64.4px;height:32px;border-radius:5px;background:#fff;border:1px solid #e5e7eb"></div>
<span class="t" style="left:1344.2px;top:222.01px;font-size:12.8px;line-height:15px;-webkit-text-stroke:0.26px currentColor;color:#6b7280;letter-spacing:-0.238px">GitHub</span>
<div class="a" style="left:930.7px;top:272.8px;width:471px;height:233px;border-radius:10px;background:linear-gradient(180deg,#fdfdfe,#ffffff);border:1px solid #e5e7eb;box-shadow:0 1px 2px rgba(0,0,0,.03)"></div>
<div class="a" style="left:949.2px;top:292.4px;width:33.6px;height:33.4px;border-radius:7px;background:#eef0ff"></div>
<svg style="left:958.9px;top:301.9px" width="14.4" height="14.8" viewBox="0 0 14.4 14.8"><g fill="none" stroke="#6366f1" stroke-width="1" stroke-linecap="round"><circle cx="3.55" cy="2.4" r="2"/><circle cx="10.85" cy="2.4" r="2"/><circle cx="7.2" cy="7.1" r="2"/><ellipse cx="7.2" cy="12.4" rx="2.9" ry="2"/><path d="M4.2 5.3 C1.6 5.3 0.5 6.2 0.5 7.2 C0.5 8.3 1.8 9 3.9 9"/><path d="M10.2 5.3 C12.8 5.3 13.9 6.2 13.9 7.2 C13.9 8.3 12.6 9 10.5 9"/></g></svg>
<span class="t" style="left:993.2px;top:295.01px;font-size:14.4px;line-height:17px;-webkit-text-stroke:0.45px currentColor;color:#1f2937;letter-spacing:-0.083px">HeapSort-master/src/HeapSort.java</span>
<span class="t" style="left:993.2px;top:322.01px;font-size:10px;line-height:12px;color:#9ca3af;font-family:'Liberation Mono','DejaVu Sans Mono',monospace;letter-spacing:-0.541px">HeapSort.java</span>
<div class="a" style="left:1347px;top:284.3px;width:44px;height:25.4px;border-radius:13px;background:linear-gradient(135deg,#10b981,#0a9a6a);box-shadow:0 2px 5px rgba(16,185,129,.35)"></div>
<span class="t" style="left:1356.6px;top:291.01px;font-size:12px;line-height:14px;font-weight:700;color:#ffffff;letter-spacing:0.190px">31%</span>
<div class="a" style="left:993.2px;top:342px;width:389.4px;height:99.5px;border-radius:6px;background:#fafbfc;border:1px solid #e5e7eb"></div>
<span class="t" style="left:1008px;top:355.01px;font-size:9.8px;line-height:12px;-webkit-text-stroke:0.26px currentColor;color:#6b7280;letter-spacing:-0.016px">YOUR CODE</span>
<span class="t" style="left:1004.3px;top:373px;font-size:12px;line-height:14px;font-weight:700;color:#1f2937;font-family:'Liberation Mono','DejaVu Sans Mono',monospace;letter-spacing:-0.669px">Lines 25-29 (5)</span>
<svg style="left:1192px;top:356.8px" width="9" height="9" viewBox="0 0 9 9"><rect x="0.5" y="2.6" width="5.6" height="5.6" rx="1.4" fill="none" stroke="#9ca3af" stroke-width=".9"/><path d="M2.8 2.4 V1.8 C2.8 1 3.2 .6 4 .6 H7 C7.8 .6 8.4 1 8.4 1.8 V4.8 C8.4 5.6 8 6 7.2 6 H6.4" fill="none" stroke="#9ca3af" stroke-width=".9"/></svg>
<span class="t" style="left:1205.8px;top:355.01px;font-size:9.8px;line-height:12px;-webkit-text-stroke:0.26px currentColor;color:#6b7280;letter-spacing:0.112px">MATCHED</span>
<span class="t" style="left:1192.2px;top:373px;font-size:12px;line-height:14px;font-weight:700;color:#1f2937;font-family:'Liberation Mono','DejaVu Sans Mono',monospace;letter-spacing:-0.669px">Lines 18-23 (6)</span>
<svg style="left:1004.3px;top:398.6px" width="9" height="9" viewBox="0 0 9 9"><g fill="none" stroke="#9ca3af" stroke-width=".9"><circle cx="2.4" cy="2.4" r="1.7"/><circle cx="6.6" cy="2.4" r="1.7"/><circle cx="2.4" cy="6.6" r="1.7"/><circle cx="6.6" cy="6.6" r="1.7"/></g></svg>
<span class="t" style="left:1017.6px;top:398.01px;font-size:9.8px;line-height:12px;-webkit-text-stroke:0.26px currentColor;color:#6b7280;letter-spacing:-0.473px">TYPE</span>
<span class="t" style="left:1004.3px;top:416.01px;font-size:12px;line-height:14px;color:#6366f1;font-family:'Liberation Mono','DejaVu Sans Mono',monospace;letter-spacing:-0.670px">Peer</span>
<div class="a" style="left:940.7px;top:460px;width:450.4px;height:35px;background:linear-gradient(90deg,#f9fafb,#f6f7f9 60%,#f3f4f6);border-top:1px solid #e5e7eb"></div>
<svg style="left:1113px;top:472px" width="14" height="12" viewBox="0 0 14 12"><ellipse cx="7" cy="6" rx="6.2" ry="4.8" fill="none" stroke="#6b7280" stroke-width="1.3"/><circle cx="7" cy="6" r="1.9" fill="none" stroke="#6b7280" stroke-width="1.3"/></svg>
<span class="t" style="left:1132.6px;top:472.01px;font-size:12.4px;line-height:15px;-webkit-text-stroke:0.26px currentColor;color:#4b5563;letter-spacing:-0.069px">View Full Match</span>
<div class="a" style="left:930.7px;top:513.7px;width:471px;height:233px;border-radius:10px;background:linear-gradient(180deg,#fdfdfe,#ffffff);border:1px solid #e5e7eb;box-shadow:0 1px 2px rgba(0,0,0,.03)"></div>
<div class="a" style="left:949.2px;top:533.3px;width:33.6px;height:33.4px;border-radius:7px;background:#eef0ff"></div>
<svg style="left:958.9px;top:542.8px" width="14.4" height="14.8" viewBox="0 0 14.4 14.8"><g fill="none" stroke="#6366f1" stroke-width="1" stroke-linecap="round"><circle cx="3.55" cy="2.4" r="2"/><circle cx="10.85" cy="2.4" r="2"/><circle cx="7.2" cy="7.1" r="2"/><ellipse cx="7.2" cy="12.4" rx="2.9" ry="2"/><path d="M4.2 5.3 C1.6 5.3 0.5 6.2 0.5 7.2 C0.5 8.3 1.8 9 3.9 9"/><path d="M10.2 5.3 C12.8 5.3 13.9 6.2 13.9 7.2 C13.9 8.3 12.6 9 10.5 9"/></g></svg>
<span class="t" style="left:993.2px;top:536.01px;font-size:14.4px;line-height:17px;-webkit-text-stroke:0.45px currentColor;color:#1f2937;letter-spacing:-0.083px">HeapSort-master/src/HeapSort.java</span>
<span class="t" style="left:993.2px;top:563px;font-size:10px;line-height:12px;color:#9ca3af;font-family:'Liberation Mono','DejaVu Sans Mono',monospace;letter-spacing:-0.541px">HeapSort.java</span>
<div class="a" style="left:1347px;top:525.2px;width:44px;height:25.4px;border-radius:13px;background:linear-gradient(135deg,#10b981,#0a9a6a);box-shadow:0 2px 5px rgba(16,185,129,.35)"></div>
<span class="t" style="left:1356.6px;top:532px;font-size:12px;line-height:14px;font-weight:700;color:#ffffff;letter-spacing:0.190px">31%</span>
<div class="a" style="left:993.2px;top:582.9px;width:389.4px;height:99.5px;border-radius:6px;background:#fafbfc;border:1px solid #e5e7eb"></div>
<span class="t" style="left:1008px;top:596.01px;font-size:9.8px;line-height:12px;-webkit-text-stroke:0.26px currentColor;color:#6b7280;letter-spacing:-0.016px">YOUR CODE</span>
<span class="t" style="left:1004.3px;top:614.01px;font-size:12px;line-height:14px;font-weight:700;color:#1f2937;font-family:'Liberation Mono','DejaVu Sans Mono',monospace;letter-spacing:-0.668px">Lines 37-52 (16)</span>
<svg style="left:1192px;top:597.7px" width="9" height="9" viewBox="0 0 9 9"><rect x="0.5" y="2.6" width="5.6" height="5.6" rx="1.4" fill="none" stroke="#9ca3af" stroke-width=".9"/><path d="M2.8 2.4 V1.8 C2.8 1 3.2 .6 4 .6 H7 C7.8 .6 8.4 1 8.4 1.8 V4.8 C8.4 5.6 8 6 7.2 6 H6.4" fill="none" stroke="#9ca3af" stroke-width=".9"/></svg>
<span class="t" style="left:1205.8px;top:596.01px;font-size:9.8px;line-height:12px;-webkit-text-stroke:0.26px currentColor;color:#6b7280;letter-spacing:0.112px">MATCHED</span>
<span class="t" style="left:1192.2px;top:614.01px;font-size:12px;line-height:14px;font-weight:700;color:#1f2937;font-family:'Liberation Mono','DejaVu Sans Mono',monospace;letter-spacing:-0.668px">Lines 29-46 (18)</span>
<svg style="left:1004.3px;top:639.5px" width="9" height="9" viewBox="0 0 9 9"><g fill="none" stroke="#9ca3af" stroke-width=".9"><circle cx="2.4" cy="2.4" r="1.7"/><circle cx="6.6" cy="2.4" r="1.7"/><circle cx="2.4" cy="6.6" r="1.7"/><circle cx="6.6" cy="6.6" r="1.7"/></g></svg>
<span class="t" style="left:1017.6px;top:639.02px;font-size:9.8px;line-height:12px;-webkit-text-stroke:0.26px currentColor;color:#6b7280;letter-spacing:-0.473px">TYPE</span>
<span class="t" style="left:1004.3px;top:656.01px;font-size:12px;line-height:14px;color:#6366f1;font-family:'Liberation Mono','DejaVu Sans Mono',monospace;letter-spacing:-0.670px">Peer</span>
<div class="a" style="left:940.7px;top:700.9px;width:450.4px;height:35px;background:linear-gradient(90deg,#f9fafb,#f6f7f9 60%,#f3f4f6);border-top:1px solid #e5e7eb"></div>
<svg style="left:1113px;top:712.9px" width="14" height="12" viewBox="0 0 14 12"><ellipse cx="7" cy="6" rx="6.2" ry="4.8" fill="none" stroke="#6b7280" stroke-width="1.3"/><circle cx="7" cy="6" r="1.9" fill="none" stroke="#6b7280" stroke-width="1.3"/></svg>
<span class="t" style="left:1132.6px;top:713.02px;font-size:12.4px;line-height:15px;-webkit-text-stroke:0.26px currentColor;color:#4b5563;letter-spacing:-0.069px">View Full Match</span>
<div class="a" style="left:930.7px;top:754.6px;width:471px;height:233px;border-radius:10px;background:linear-gradient(180deg,#fdfdfe,#ffffff);border:1px solid #e5e7eb;box-shadow:0 1px 2px rgba(0,0,0,.03)"></div>
<div class="a" style="left:949.2px;top:774.2px;width:33.6px;height:33.4px;border-radius:7px;background:#eef0ff"></div>
<svg style="left:958.9px;top:783.7px" width="14.4" height="14.8" viewBox="0 0 14.4 14.8"><g fill="none" stroke="#6366f1" stroke-width="1" stroke-linecap="round"><circle cx="3.55" cy="2.4" r="2"/><circle cx="10.85" cy="2.4" r="2"/><circle cx="7.2" cy="7.1" r="2"/><ellipse cx="7.2" cy="12.4" rx="2.9" ry="2"/><path d="M4.2 5.3 C1.6 5.3 0.5 6.2 0.5 7.2 C0.5 8.3 1.8 9 3.9 9"/><path d="M10.2 5.3 C12.8 5.3 13.9 6.2 13.9 7.2 C13.9 8.3 12.6 9 10.5 9"/></g></svg>
<span class="t" style="left:993.2px;top:777px;font-size:14.4px;line-height:17px;-webkit-text-stroke:0.45px currentColor;color:#1f2937;letter-spacing:-0.069px">Sorts-main/Heap.java</span>
<span class="t" style="left:993.2px;top:804.01px;font-size:10px;line-height:12px;color:#9ca3af;font-family:'Liberation Mono','DejaVu Sans Mono',monospace;letter-spacing:-0.542px">Heap.java</span>
<div class="a" style="left:1347px;top:766.1px;width:44px;height:25.4px;border-radius:13px;background:linear-gradient(135deg,#10b981,#0a9a6a);box-shadow:0 2px 5px rgba(16,185,129,.35)"></div>
<span class="t" style="left:1356.6px;top:773.01px;font-size:12px;line-height:14px;font-weight:700;color:#ffffff;letter-spacing:0.190px">28%</span>
<div class="a" style="left:993.2px;top:823.8px;width:389.4px;height:99.5px;border-radius:6px;background:#fafbfc;border:1px solid #e5e7eb"></div>
<span class="t" style="left:1008px;top:837.02px;font-size:9.8px;line-height:12px;-webkit-text-stroke:0.26px currentColor;color:#6b7280;letter-spacing:-0.016px">YOUR CODE</span>
<span class="t" style="left:1004.3px;top:854.01px;font-size:12px;line-height:14px;font-weight:700;color:#1f2937;font-family:'Liberation Mono','DejaVu Sans Mono',monospace;letter-spacing:-0.669px">Lines 25-31 (7)</span>
<svg style="left:1192px;top:838.6px" width="9" height="9" viewBox="0 0 9 9"><rect x="0.5" y="2.6" width="5.6" height="5.6" rx="1.4" fill="none" stroke="#9ca3af" stroke-width=".9"/><path d="M2.8 2.4 V1.8 C2.8 1 3.2 .6 4 .6 H7 C7.8 .6 8.4 1 8.4 1.8 V4.8 C8.4 5.6 8 6 7.2 6 H6.4" fill="none" stroke="#9ca3af" stroke-width=".9"/></svg>
<span class="t" style="left:1205.8px;top:837.02px;font-size:9.8px;line-height:12px;-webkit-text-stroke:0.26px currentColor;color:#6b7280;letter-spacing:0.112px">MATCHED</span>
<span class="t" style="left:1192.2px;top:854.01px;font-size:12px;line-height:14px;font-weight:700;color:#1f2937;font-family:'Liberation Mono','DejaVu Sans Mono',monospace;letter-spacing:-0.668px">Lines 337-342 (6)</span>
<svg style="left:1004.3px;top:880.4px" width="9" height="9" viewBox="0 0 9 9"><g fill="none" stroke="#9ca3af" stroke-width=".9"><circle cx="2.4" cy="2.4" r="1.7"/><circle cx="6.6" cy="2.4" r="1.7"/><circle cx="2.4" cy="6.6" r="1.7"/><circle cx="6.6" cy="6.6" r="1.7"/></g></svg>
<span class="t" style="left:1017.6px;top:879.01px;font-size:9.8px;line-height:12px;-webkit-text-stroke:0.26px currentColor;color:#6b7280;letter-spacing:-0.473px">TYPE</span>
<span class="t" style="left:1004.3px;top:897.01px;font-size:12px;line-height:14px;color:#6366f1;font-family:'Liberation Mono','DejaVu Sans Mono',monospace;letter-spacing:-0.670px">Peer</span>
<div class="a" style="left:940.7px;top:941.8px;width:450.4px;height:35px;background:linear-gradient(90deg,#f9fafb,#f6f7f9 60%,#f3f4f6);border-top:1px solid #e5e7eb"></div>
<svg style="left:1113px;top:953.8px" width="14" height="12" viewBox="0 0 14 12"><ellipse cx="7" cy="6" rx="6.2" ry="4.8" fill="none" stroke="#6b7280" stroke-width="1.3"/><circle cx="7" cy="6" r="1.9" fill="none" stroke="#6b7280" stroke-width="1.3"/></svg>
<span class="t" style="left:1132.6px;top:954.01px;font-size:12.4px;line-height:15px;-webkit-text-stroke:0.26px currentColor;color:#4b5563;letter-spacing:-0.069px">View Full Match</span>
<!-- ===== Analytics panel ===== -->
<div class="a" style="left:1431px;top:198px;width:427px;height:674.5px;background:#fafafb;border:1px solid #e7e9ee;border-top-color:#eff1f4;border-radius:9px 9px 0 0;box-shadow:0 1px 3px rgba(0,0,0,.04);overflow:hidden"><div class="a" style="left:0;top:0;width:100%;height:56px;background:linear-gradient(180deg,#fbfbfd,#fdfdfe);border-bottom:1px solid #eceef2"></div></div>
<svg style="left:1451px;top:218.8px" width="16" height="16" viewBox="0 0 16 16"><rect x="0.8" y="0.8" width="14.4" height="14.4" rx="4" fill="#eef0ff" stroke="#6366f1" stroke-width="1.2"/><path d="M4.4 9.8 L6.6 7.6 L8.6 8.8 L11.6 6.2" fill="none" stroke="#6366f1" stroke-width="1.1" stroke-linecap="round" stroke-linejoin="round"/></svg>
<span class="t" style="left:1478.1px;top:217.02px;font-size:15.6px;line-height:19px;-webkit-text-stroke:0.26px currentColor;color:#1f2937;letter-spacing:-0.156px">Analytics</span>
<div class="a" style="left:1448.9px;top:271.4px;width:391.7px;height:489.8px;border-radius:10px;background:#fff;border:1px solid #e5e7eb;box-shadow:0 1px 2px rgba(0,0,0,.03)"></div>
<span class="t" style="left:1469.2px;top:295.01px;font-size:15.4px;line-height:18px;-webkit-text-stroke:0.45px currentColor;color:#1f2937;letter-spacing:-0.304px">Plagiarism Risk Assessment</span>
<span class="t" style="left:1469.2px;top:326.01px;font-size:12.2px;line-height:15px;color:#6b7280;letter-spacing:-0.204px">Overall submission risk</span>
<span class="t" style="-webkit-text-stroke:0.3px currentColor;left:1619.6px;top:359.01px;font-size:35.6px;line-height:43px;font-weight:700;color:#1f2937;letter-spacing:-0.511px">9%</span>
<span class="t" style="left:1603.9px;top:406px;font-size:13.8px;line-height:17px;-webkit-text-stroke:0.45px currentColor;color:#6b7280;letter-spacing:-0.190px">✓ LOW RISK</span>
<div class="a" style="left:1469.2px;top:444.2px;width:350.7px;height:23.6px;border-radius:12px;background:#f3f4f6"></div>
<div class="a" style="left:1469.2px;top:444.2px;width:32px;height:23.6px;border-radius:12px;background:linear-gradient(90deg,#10b981,#2cc890);box-shadow:3px 0 7px rgba(16,185,129,.35)"></div>
<span class="t" style="left:1472.9px;top:478.01px;font-size:9.4px;line-height:11px;-webkit-text-stroke:0.45px currentColor;color:#9ca3af;letter-spacing:0.069px">0%</span>
<span class="t" style="left:1575.8px;top:478.01px;font-size:9.4px;line-height:11px;-webkit-text-stroke:0.45px currentColor;color:#9ca3af;letter-spacing:0.278px">45%</span>
<span class="t" style="left:1684.2px;top:478.01px;font-size:9.4px;line-height:11px;-webkit-text-stroke:0.45px currentColor;color:#9ca3af;letter-spacing:0.278px">75%</span>
<span class="t" style="left:1792.5px;top:478.01px;font-size:9.4px;line-height:11px;-webkit-text-stroke:0.45px currentColor;color:#9ca3af;letter-spacing:-0.146px">100%</span>
<div class="a" style="left:1469.1px;top:511.2px;width:350.8px;height:121.3px;border-radius:8px;background:#f3f4f6;border:1px solid #e5e7eb"></div>
<div class="a" style="left:1486.3px;top:528.3px;width:97.4px;height:87px;border-radius:7px;background:#6366f1"></div>
<div class="a" style="left:1488.9px;top:528.3px;width:94.8px;height:87px;border-radius:6px;background:#fff;border:1px solid #eceef1;border-left:none"></div>
<div class="a" style="left:1595.8px;top:528.3px;width:97px;height:87px;border-radius:7px;background:#3b82f6"></div>
<div class="a" style="left:1598.4px;top:528.3px;width:94.4px;height:87px;border-radius:6px;background:#fff;border:1px solid #eceef1;border-left:none"></div>
<div class="a" style="left:1704.9px;top:528.3px;width:97.9px;height:87px;border-radius:7px;background:#f59e0b"></div>
<div class="a" style="left:1707.5px;top:528.3px;width:95.3px;height:87px;border-radius:6px;background:#fff;border:1px solid #eceef1;border-left:none"></div>
<svg style="left:1501.2px;top:548.6px" width="12.6" height="13" viewBox="0 0 14.4 14.8"><g fill="none" stroke="#6366f1" stroke-width="1" stroke-linecap="round"><circle cx="3.55" cy="2.4" r="2"/><circle cx="10.85" cy="2.4" r="2"/><circle cx="7.2" cy="7.1" r="2"/><ellipse cx="7.2" cy="12.4" rx="2.9" ry="2"/><path d="M4.2 5.3 C1.6 5.3 0.5 6.2 0.5 7.2 C0.5 8.3 1.8 9 3.9 9"/><path d="M10.2 5.3 C12.8 5.3 13.9 6.2 13.9 7.2 C13.9 8.3 12.6 9 10.5 9"/></g></svg>
<span class="t" style="left:1520.5px;top:543.01px;font-size:9.9px;line-height:12px;-webkit-text-stroke:0.45px currentColor;color:#6366f1;letter-spacing:-0.627px">PEER</span>
<span class="t" style="left:1520.5px;top:558.01px;font-size:9.9px;line-height:12px;-webkit-text-stroke:0.45px currentColor;color:#6366f1;letter-spacing:0.036px">MATCHES</span>
<span class="t" style="-webkit-text-stroke:0.45px currentColor;left:1501.6px;top:579.01px;font-size:22.6px;line-height:27px;font-weight:700;color:#111827;letter-spacing:0.822px">9%</span>
<span class="t" style="left:1617px;top:543.01px;font-size:9.9px;line-height:12px;-webkit-text-stroke:0.45px currentColor;color:#3b82f6;letter-spacing:-0.267px">WEB</span>
<span class="t" style="left:1617px;top:558.01px;font-size:9.9px;line-height:12px;-webkit-text-stroke:0.45px currentColor;color:#3b82f6;letter-spacing:-0.021px">MATCHES</span>
<span class="t" style="-webkit-text-stroke:0.45px currentColor;left:1611.2px;top:579.01px;font-size:22.6px;line-height:27px;font-weight:700;color:#111827;letter-spacing:0.772px">0%</span>
<svg style="left:1720.6px;top:549.6px" width="12" height="11" viewBox="0 0 12 11"><path d="M1.2 2.4 L3.6 4.4 L6 1.4 L8.4 4.4 L10.8 2.4 V7.4 C10.8 9 10 9.8 8.4 9.8 H3.6 C2 9.8 1.2 9 1.2 7.4 Z" fill="none" stroke="#f59e0b" stroke-width="1.05" stroke-linejoin="round"/></svg>
<span class="t" style="left:1740.1px;top:543.01px;font-size:9.9px;line-height:12px;-webkit-text-stroke:0.45px currentColor;color:#f59e0b;letter-spacing:-0.087px">HIGHEST</span>
<span class="t" style="left:1740.1px;top:558.01px;font-size:9.9px;line-height:12px;-webkit-text-stroke:0.45px currentColor;color:#f59e0b;letter-spacing:0.245px">MATCH</span>
<span class="t" style="-webkit-text-stroke:0.45px currentColor;left:1721.2px;top:579.01px;font-size:22.6px;line-height:27px;font-weight:700;color:#111827;letter-spacing:0.255px">31%</span>
<div class="a" style="left:1469px;top:653.2px;width:351px;height:1px;background:#e5e7eb"></div>
<div class="a" style="left:1468.6px;top:672.9px;width:12px;height:12px;border-radius:50%;background:#10b981"></div>
<span class="t" style="left:1489px;top:672.02px;font-size:12.8px;line-height:15px;color:#6b7280;letter-spacing:-0.650px">Low (0-44%)</span>
<div class="a" style="left:1468.6px;top:699.1px;width:12px;height:12px;border-radius:50%;background:#f59e0b"></div>
<span class="t" style="left:1489px;top:698.02px;font-size:12.8px;line-height:15px;color:#6b7280;letter-spacing:-0.440px">Medium (45-74%)</span>
<div class="a" style="left:1468.6px;top:725.2px;width:12px;height:12px;border-radius:50%;background:#ef4444"></div>
<span class="t" style="left:1489px;top:724.02px;font-size:12.8px;line-height:15px;color:#6b7280;letter-spacing:-0.480px">High (75-100%)</span>
<div class="a" style="left:1448.9px;top:793.4px;width:391.7px;height:100px;border-radius:10px 10px 0 0;background:#fff;border:1px solid #e5e7eb"></div>
<svg style="left:1469.2px;top:817.6px" width="14" height="14" viewBox="0 0 14 14"><circle cx="7" cy="7" r="5.9" fill="none" stroke="#374151" stroke-width="1.3" stroke-dasharray="3.2 0.6"/><path d="M7 3.9 V7.6 M7 9.6 V9.9" stroke="#374151" stroke-width="1.5" stroke-linecap="round"/></svg>
<span class="t" style="left:1492.1px;top:817.01px;font-size:15px;line-height:18px;-webkit-text-stroke:0.45px currentColor;color:#1f2937;letter-spacing:0.024px">Submission Details</span>
<span class="t" style="left:1469.1px;top:847.01px;font-size:12.6px;line-height:15px;color:#6b7280;letter-spacing:-0.405px">Comprehensive metadata</span>
<!-- ===== bottom scrollbar / floats ===== -->

<div class="a" style="left:49.5px;top:871px;width:1824.5px;height:15.5px;background:#fbfbfc;border-top:1px solid #efeff1"></div>
<div class="a" style="left:52px;top:873.6px;width:1794px;height:9.4px;border-radius:5px;background:#e1e1e3"></div>
<div class="a" style="left:0;top:887px;width:1892px;height:5px;background:#f3f4f6"></div>
<div class="a" style="left:11px;top:836px;width:133px;height:50px;border-radius:25px;background:#f0f1f4;box-shadow:0 2px 6px rgba(17,24,39,.10)"></div>
<div class="a" style="left:15.5px;top:824.2px;width:197px;height:57.6px;border-radius:11px;background:linear-gradient(180deg,#ffffff,#f8f9fb);border:1px solid #eef0f4;box-shadow:0 4px 14px rgba(17,24,39,.12),0 1px 3px rgba(17,24,39,.08)"></div>
<svg style="left:32.6px;top:843.6px" width="17.2" height="17.8" viewBox="0 0 14.4 14.8"><g fill="none" stroke="#6366f1" stroke-width="1" stroke-linecap="round"><circle cx="3.55" cy="2.4" r="2"/><circle cx="10.85" cy="2.4" r="2"/><circle cx="7.2" cy="7.1" r="2"/><ellipse cx="7.2" cy="12.4" rx="2.9" ry="2"/><path d="M4.2 5.3 C1.6 5.3 0.5 6.2 0.5 7.2 C0.5 8.3 1.8 9 3.9 9"/><path d="M10.2 5.3 C12.8 5.3 13.9 6.2 13.9 7.2 C13.9 8.3 12.6 9 10.5 9"/></g></svg>
<span class="t" style="left:60.2px;top:845.01px;font-size:14.4px;line-height:17px;-webkit-text-stroke:0.45px currentColor;color:#1f2937;letter-spacing:-0.309px">Submissions</span>
<div class="a" style="left:149.2px;top:844.4px;width:31px;height:16.8px;border-radius:9px;background:linear-gradient(90deg,#3b82f6,#6366f1)"></div>
<span class="t" style="left:157.3px;top:846px;font-size:11.4px;line-height:14px;font-weight:700;color:#ffffff;letter-spacing:0.464px">34</span>
<div class="a" style="left:180.3px;top:839px;width:29.5px;height:26.5px;border-radius:6px;background:#f1f3f6"></div>
<svg style="left:189.5px;top:847.5px" width="12" height="8" viewBox="0 0 12 8"><path d="M1 1.4 L6 6.2 L11 1.4" fill="none" stroke="#4b5563" stroke-width="1.4" stroke-linecap="round" stroke-linejoin="round"/></svg>
<div class="a" style="left:1829.8px;top:762.7px;width:56px;height:56px;border-radius:50%;background:#2f80fb;box-shadow:0 4px 12px rgba(99,102,241,.3)"></div>
<svg style="left:1846.5px;top:779.5px" width="23" height="23" viewBox="0 0 23 23"><g fill="#4a90fb" stroke="#fff" stroke-width="2"><rect x="1.4" y="1.4" width="8.4" height="8.4" rx="1.6"/><rect x="13.2" y="1.4" width="8.4" height="8.4" rx="1.6"/><rect x="1.4" y="13.2" width="8.4" height="8.4" rx="1.6"/><rect x="13.2" y="13.2" width="8.4" height="8.4" rx="1.6"/></g></svg>
<div class="a" style="left:1842px;top:830.5px;width:60px;height:60px;border-radius:50%;background:#2470e8"></div>
<div class="a" style="left:1857.2px;top:847.4px;width:30.2px;height:27px;border-radius:8px;background:#fff"></div>
<span class="t" style="left:1871.8px;transform:translateX(-50%);top:849px;font-size:22px;line-height:26px;font-weight:700;color:#2470e8">?</span>
</body>
</html>
